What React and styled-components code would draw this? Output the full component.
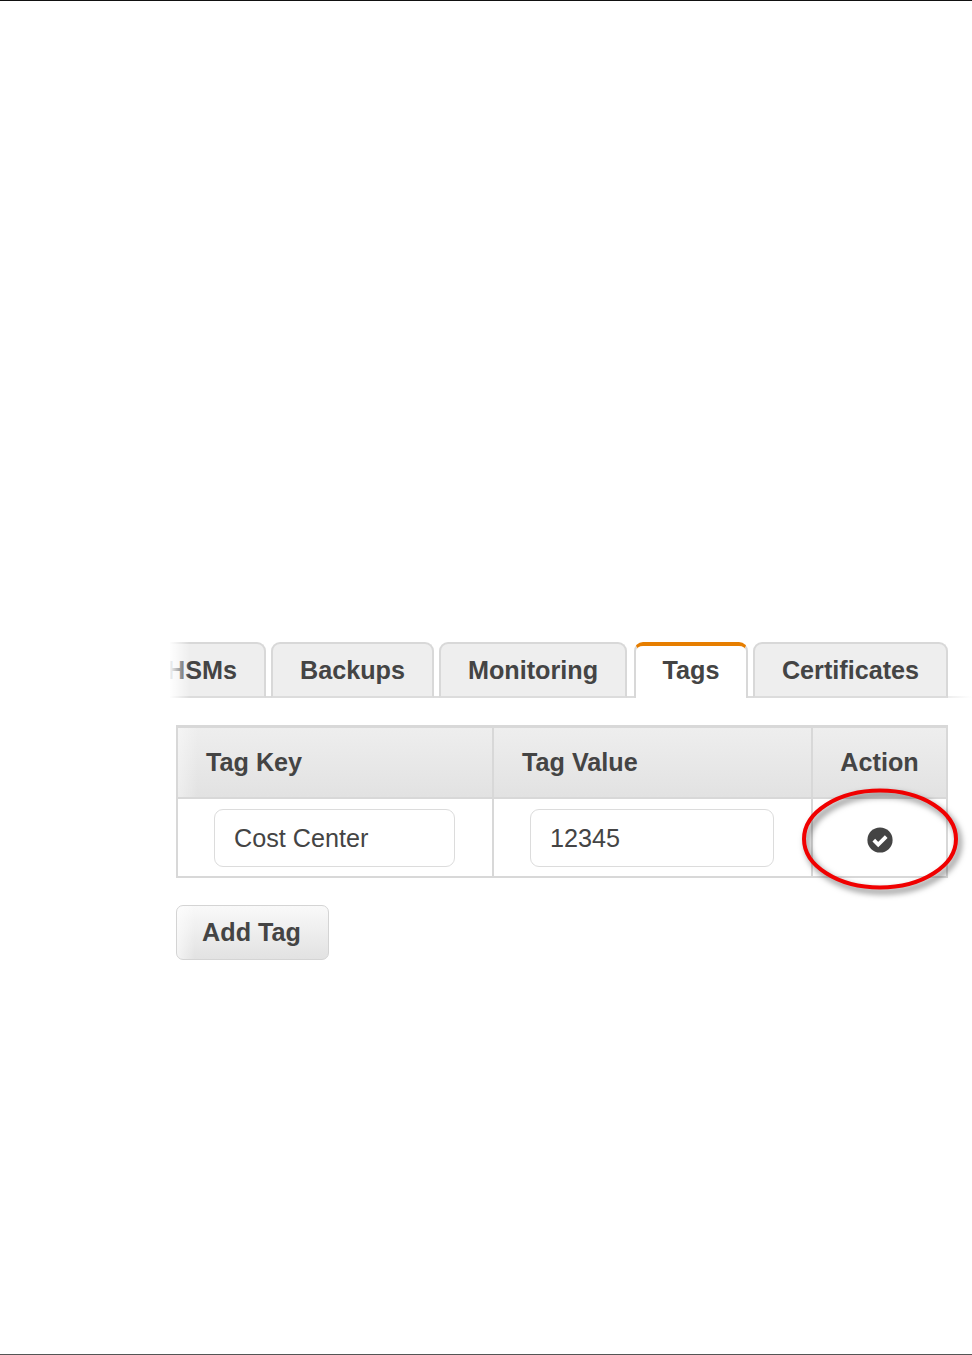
import React from 'react';
import styled, { createGlobalStyle } from 'styled-components';

const Global = createGlobalStyle`
  html, body { margin: 0; padding: 0; background: #fff; }
  body { font-family: "Liberation Sans", Arial, sans-serif; color: #444; }
`;

const Page = styled.div`
  box-sizing: border-box;
  height: 1355px;
  overflow: hidden;
  border-top: 1px solid #111;
  border-bottom: 1px solid #555;
  padding: 641px 0 0 170px;
`;

const TabStrip = styled.div`
  position: relative;
  display: flex;
  align-items: flex-end;
  height: 56px;
  width: 802px;
  overflow: hidden;
  box-sizing: border-box;
  &::before {
    content: '';
    position: absolute;
    left: 0; right: 0; bottom: 0;
    height: 2px;
    background: linear-gradient(90deg, #dcdcdc 0, #dcdcdc 94%, #fff 100%);
  }
  &::after {
    content: '';
    position: absolute;
    left: 0; top: 0; bottom: 0;
    width: 20px;
    background: linear-gradient(90deg, rgba(255,255,255,0.95) 0%, rgba(255,255,255,0) 100%);
  }
`;

const Tab = styled.div`
  position: relative;
  z-index: ${p => (p.$active ? 1 : 0)};
  box-sizing: border-box;
  flex: none;
  width: ${p => p.$w}px;
  margin-left: ${p => p.$ml}px;
  height: 56px;
  display: flex;
  align-items: center;
  justify-content: center;
  font-size: 25.2px;
  font-weight: 700;
  color: #444;
  background: ${p => (p.$active ? '#fff' : '#eeeeee')};
  border: 2px solid #d8d8d8;
  border-top: ${p => (p.$active ? '4px solid #e67e00' : '2px solid #d8d8d8')};
  border-bottom: ${p => (p.$active ? 'none' : '2px solid #dcdcdc')};
  border-radius: 9px 9px 0 0;
  padding-bottom: ${p => (p.$active ? 4 : 0)}px;
`;

const TagTable = styled.div`
  position: relative;
  margin: 27px 0 0 6px;
  width: 772px;
  box-sizing: border-box;
  display: grid;
  grid-template-columns: 314px 319px 1fr;
  border: 2px solid #d8d8d8;
  border-top-width: 3px;
`;

const HeadCell = styled.div`
  box-sizing: border-box;
  height: 71px;
  display: flex;
  align-items: center;
  justify-content: ${p => (p.$center ? 'center' : 'flex-start')};
  padding-left: ${p => (p.$center ? 0 : 28)}px;
  font-size: 25.2px;
  font-weight: 700;
  color: #444;
  background:
    linear-gradient(90deg, rgba(255,255,255,${p => (p.$first ? 0.4 : 0)}) 0, rgba(255,255,255,0) 20px),
    linear-gradient(180deg, #eeeeee 0%, #e2e2e2 100%);
  border-bottom: 2px solid #d8d8d8;
  border-left: ${p => (p.$first ? 'none' : '2px solid #d8d8d8')};
`;

const BodyCell = styled.div`
  box-sizing: border-box;
  height: 77px;
  display: flex;
  align-items: center;
  justify-content: ${p => (p.$center ? 'center' : 'flex-start')};
  padding-left: ${p => p.$pl || 0}px;
  border-left: ${p => (p.$first ? 'none' : '2px solid #d8d8d8')};
`;

const Field = styled.div`
  box-sizing: border-box;
  width: ${p => p.$w}px;
  height: 58px;
  display: flex;
  align-items: center;
  padding: 1px 0 0 19px;
  background: #fff;
  border: 1.5px solid #dcdcdc;
  border-radius: 9px;
  font-size: 25.2px;
  color: #444;
`;

const CheckIcon = styled.svg`
  display: block;
  width: 26px;
  height: 26px;
  margin-top: 5px;
`;

const Ring = styled.svg`
  position: absolute;
  left: 617px;
  top: 55px;
  width: 170px;
  height: 116px;
  overflow: visible;
  pointer-events: none;
  filter: drop-shadow(3px 4px 3px rgba(0,0,0,0.55));
`;

const AddButton = styled.div`
  box-sizing: border-box;
  width: 153px;
  height: 55px;
  margin: 27px 0 0 6px;
  padding-right: 2px;
  display: flex;
  align-items: center;
  justify-content: center;
  font-size: 25.2px;
  font-weight: 700;
  color: #444;
  border: 1.5px solid #d4d4d4;
  border-radius: 7px;
  background:
    linear-gradient(90deg, rgba(255,255,255,0.6) 0, rgba(255,255,255,0) 18px),
    linear-gradient(180deg, #f9f9f9 0%, #e2e2e2 100%);
`;

export default function App() {
  return (
    <Page>
      <Global />
      <TabStrip>
        <Tab $w={128} $ml={-32}>HSMs</Tab>
        <Tab $w={163} $ml={5}>Backups</Tab>
        <Tab $w={188} $ml={5}>Monitoring</Tab>
        <Tab $w={114} $ml={7} $active>Tags</Tab>
        <Tab $w={195} $ml={5}>Certificates</Tab>
      </TabStrip>
      <TagTable>
        <HeadCell $first>Tag Key</HeadCell>
        <HeadCell>Tag Value</HeadCell>
        <HeadCell $center>Action</HeadCell>
        <BodyCell $first $pl={36}><Field $w={241}>Cost Center</Field></BodyCell>
        <BodyCell $pl={36}><Field $w={244}>12345</Field></BodyCell>
        <BodyCell $center>
          <CheckIcon viewBox="0 0 26 26">
            <circle cx="13" cy="13" r="12.6" fill="#444" />
            <path d="M6.8 13.2l4.4 4.4L19.2 9.6" fill="none" stroke="#fff" strokeWidth="3.8" />
          </CheckIcon>
        </BodyCell>
        <Ring viewBox="0 0 170 116">
          <ellipse cx="85" cy="56" rx="76" ry="48.5" fill="none" stroke="#f00000" strokeWidth="4" />
        </Ring>
      </TagTable>
      <AddButton>Add Tag</AddButton>
    </Page>
  );
}
